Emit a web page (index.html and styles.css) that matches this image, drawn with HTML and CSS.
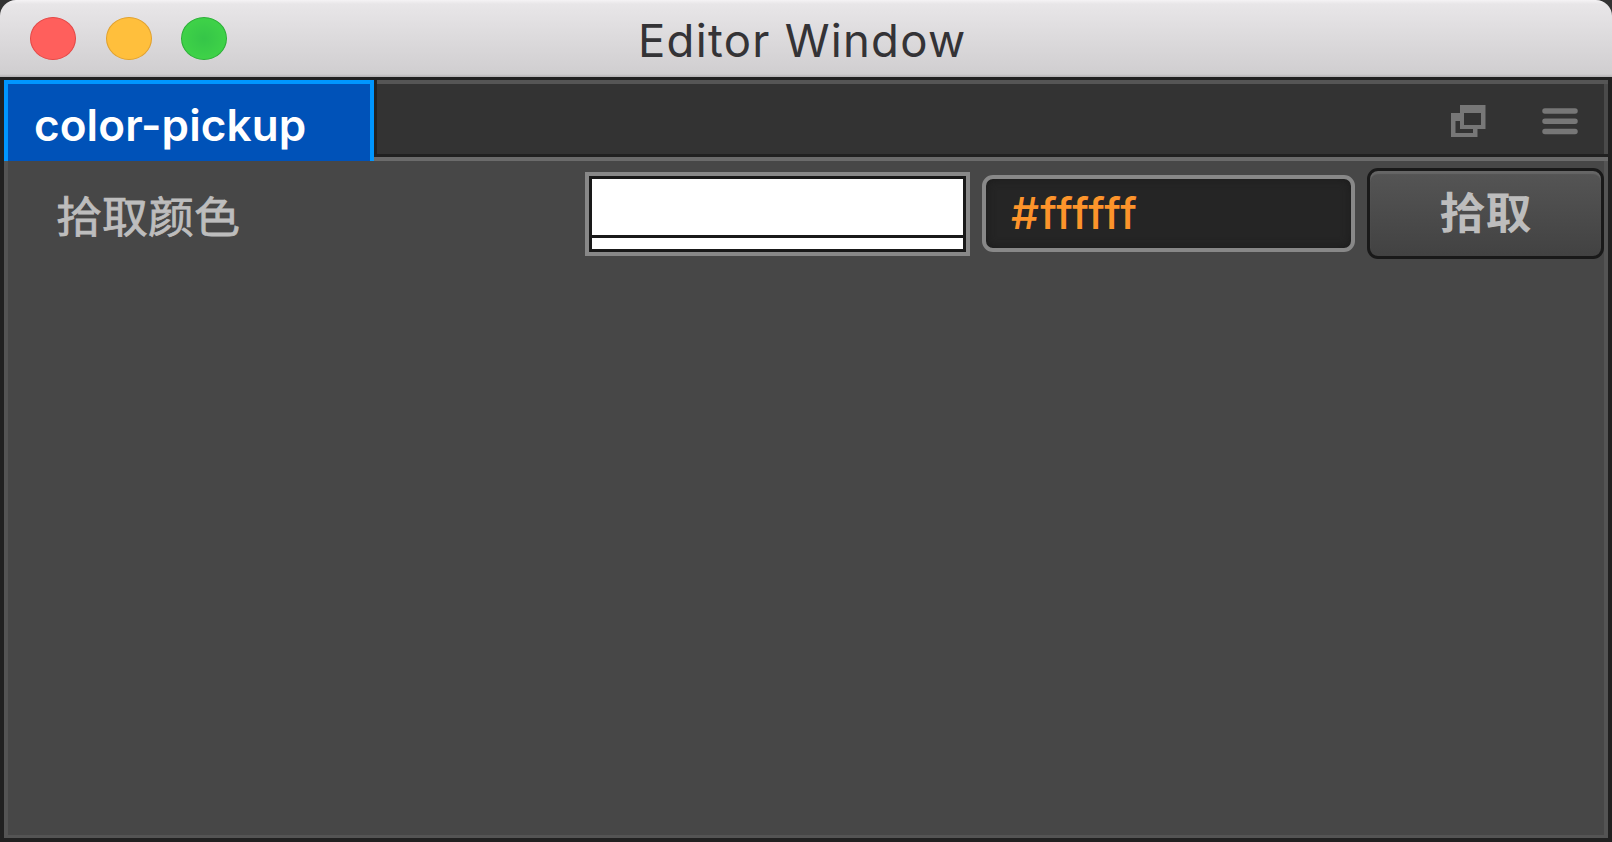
FILE: index.html
```
<!DOCTYPE html>
<html lang="zh-CN">
<head>
<meta charset="utf-8">
<title>Editor Window</title>
<link rel="stylesheet" href="styles.css">
</head>
<body>
<div class="window">
  <header class="titlebar">
    <div class="lights">
      <span class="light close"></span>
      <span class="light minimize"></span>
      <span class="light zoom"></span>
    </div>
    <h1 class="title">Editor Window</h1>
  </header>
  <main class="dock">
    <nav class="tabs">
      <div class="tab"><span class="tab-label">color-pickup</span></div>
      <div class="tabbar">
        <svg class="icon popup" width="35" height="32" viewBox="0 0 35 32"><path fill="#777" fill-rule="evenodd" d="M9 0H34.500V24H26.500V32H0V8H9ZM13 8V20H30V8ZM4.500 16V28H22V24H9V16Z"/></svg>
        <svg class="icon menu" width="36" height="27" viewBox="0 0 36 27"><path stroke="#777" stroke-width="5.500" stroke-linecap="round" d="M3 3H33M3 13.300H33M3 23.500H33"/></svg>
      </div>
    </nav>
    <section class="panel">
      <span class="label">拾取颜色</span>
      <div class="swatch"><div class="rgb"></div><div class="alpha"></div></div>
      <div class="field"><span class="value">#ffffff</span></div>
      <button class="pick"><span class="pick-label">拾取</span></button>
    </section>
  </main>
</div>
</body>
</html>
```
FILE: styles.css
```
* { box-sizing: border-box; }
body {
  margin: 0;
  background: #333;
  font-family: Inter, "Noto Sans CJK SC", sans-serif;
}
.window {
  display: flex;
  flex-direction: column;
  width: 1612px;
  height: 842px;
  overflow: hidden;
}
.titlebar {
  display: grid;
  grid-template-columns: 638px 1fr;
  height: 77px;
  border-radius: 16px 16px 0 0;
  background: linear-gradient(#f5f3f5 0, #e8e6e8 4px, #d0ced0 74px, #b4b2b4 77px);
}
.lights {
  display: flex;
  gap: 29.500px;
  padding: 17px 0 0 30px;
}
.light {
  width: 46px;
  height: 43px;
  border: 1.500px solid;
  border-radius: 50%;
}
.close { background: #ff5f5c; border-color: #e44846; }
.minimize { background: #ffbf3c; border-color: #e1a12e; }
.zoom { background: radial-gradient(#35c548, #3ed148 65%); border-color: #2aaf36; }
.title {
  margin: 0;
  padding-top: 2px;
  color: #343336;
  font-size: 45.500px;
  font-weight: 430;
  line-height: 77px;
  letter-spacing: 1.250px;
  white-space: nowrap;
}
.dock {
  flex: 1;
  display: flex;
  flex-direction: column;
  padding: 3px 4px 4px;
  background: #212121;
}
.tabs {
  display: flex;
  height: 81px;
}
.tab {
  width: 370px;
  padding-left: 26px;
  border: 4px solid #0096ff;
  border-bottom: 0;
  background: #0052b8;
}
.tab-label {
  color: #fff;
  font-size: 44px;
  font-weight: 600;
  line-height: 82px;
  letter-spacing: 0.100px;
  white-space: nowrap;
}
.tabbar {
  flex: 1;
  display: flex;
  justify-content: flex-end;
  align-items: flex-start;
  gap: 56px;
  padding: 21px 30px 0 0;
  border-bottom: 4px solid #6b6b6b;
  background:
    linear-gradient(#212121, #212121) left / 3px 100% no-repeat,
    linear-gradient(#212121, #212121) bottom / 100% 3px no-repeat,
    linear-gradient(#555, #555) top / 100% 4px no-repeat,
    linear-gradient(#4a4a4a, #4a4a4a) right / 4px 100% no-repeat,
    #333;
}
.menu { margin-top: 7px; }
.popup { margin-top: 4px; }
.panel {
  flex: 1;
  display: grid;
  grid-template-columns: 565px 385px 373px 237px;
  column-gap: 12px;
  align-items: start;
  border: 4px solid #545454;
  border-top: 0;
  border-bottom-width: 3px;
  background: #474747;
}
.label {
  padding: 23px 0 0 48px;
  color: #bdbdbd;
  font-size: 46px;
  line-height: 66px;
  -webkit-text-stroke: 0.800px #bdbdbd;
  transform: scaleY(0.95);
}
.swatch {
  display: flex;
  flex-direction: column;
  gap: 3px;
  height: 84px;
  margin-top: 11px;
  padding: 3px;
  border: 4px solid #888;
  background: #191919;
}
.rgb { flex: 1; background: #fff; }
.alpha { height: 11px; background: #fff; }
.field {
  height: 77px;
  margin-top: 14px;
  padding-left: 25px;
  border: 4px solid #888;
  border-radius: 11px;
  background: #252525;
  box-shadow: inset 0 0 10px #1b1b1b;
}
.value {
  color: #fd942b;
  font-size: 44px;
  font-weight: 550;
  line-height: 68px;
  letter-spacing: 1.100px;
  font-variant-ligatures: none;
  white-space: nowrap;
}
.pick {
  height: 91px;
  margin-top: 7px;
  padding: 0 0 7px;
  border: 3px solid #191919;
  border-radius: 11px;
  background: linear-gradient(#555, #424242);
  box-shadow: inset 0 3px 1px #666;
  color: #bdbdbd;
  font-family: "Noto Sans CJK SC", sans-serif;
  font-size: 46px;
  font-weight: 700;
  line-height: 70px;
}
.pick-label {
  display: inline-block;
  transform: scaleY(0.94);
}
```
